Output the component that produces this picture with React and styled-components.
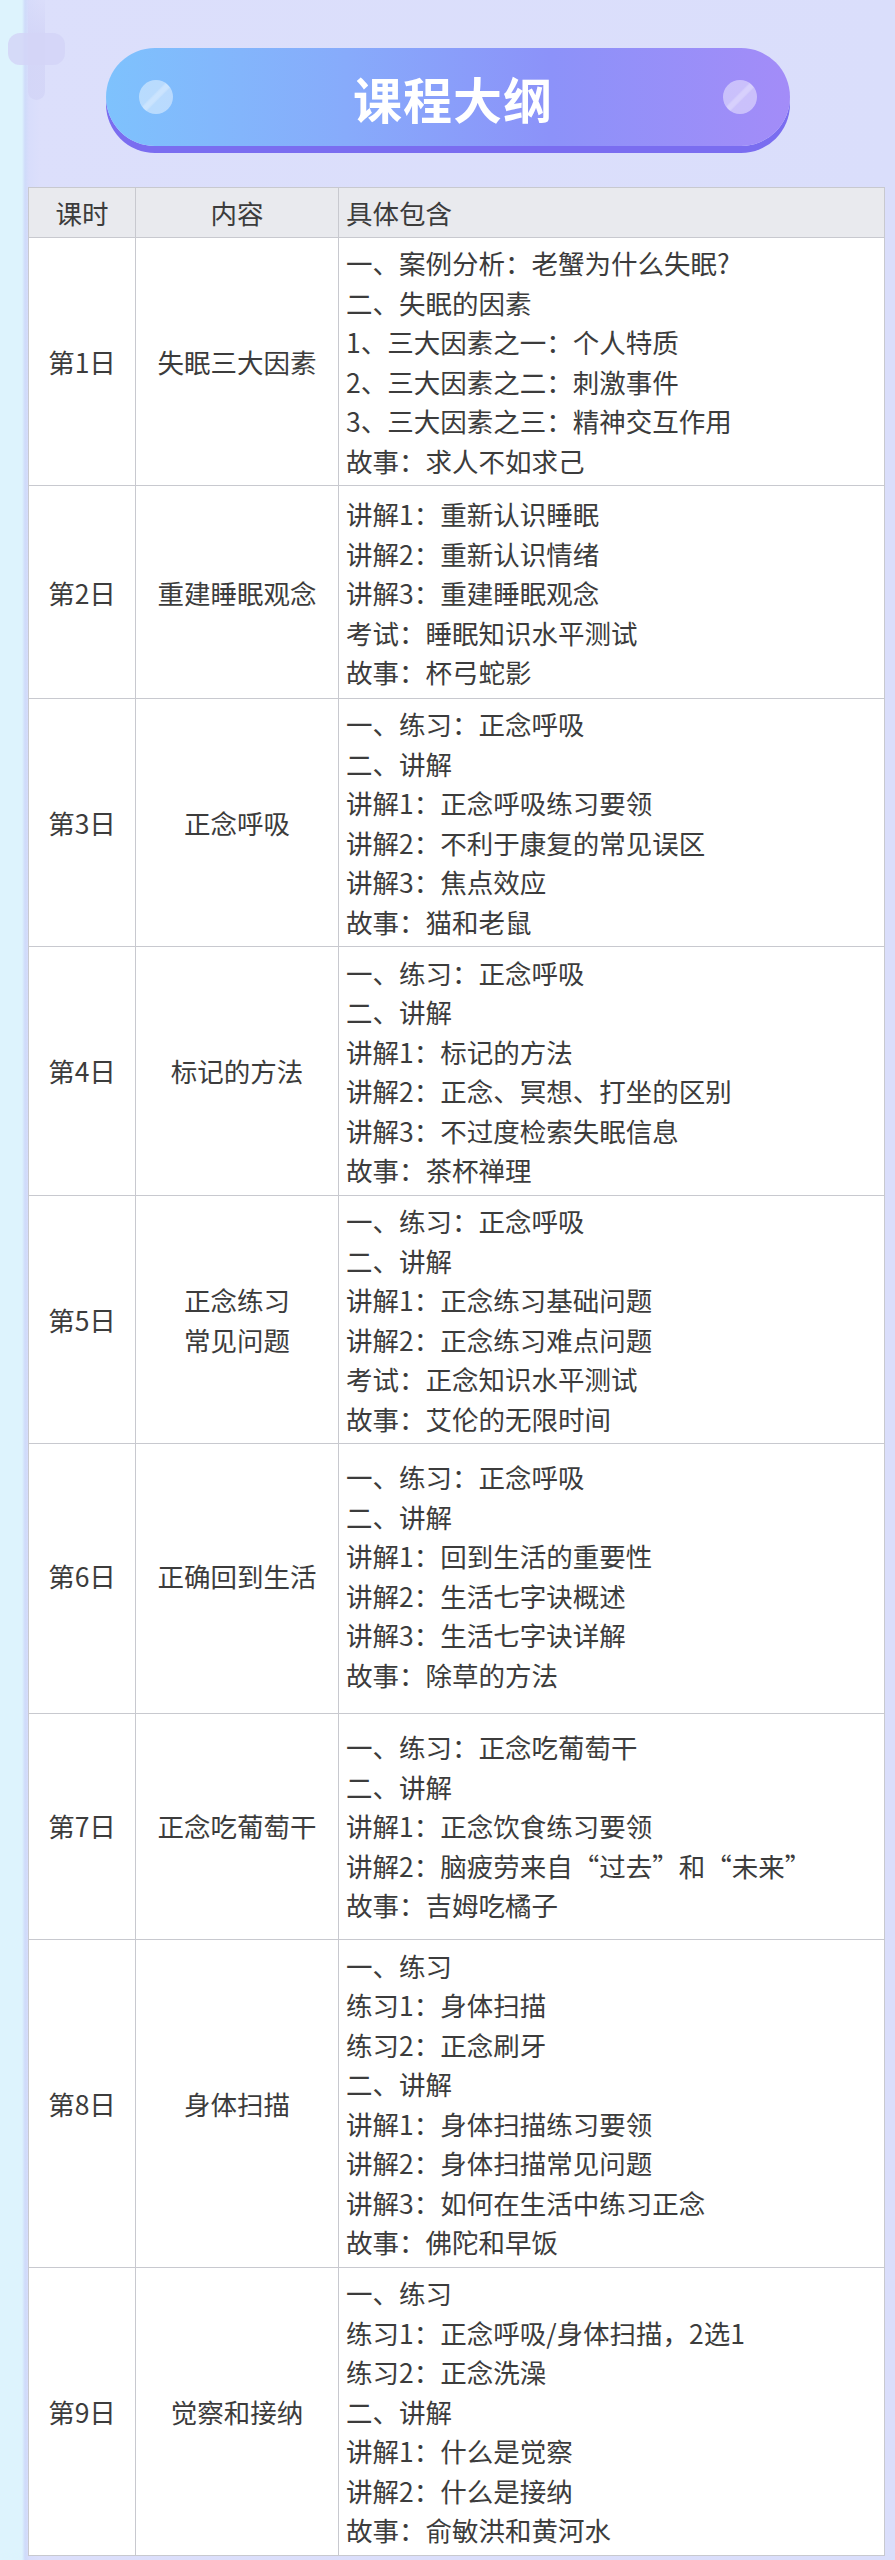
import React from "react";
import styled, { createGlobalStyle } from "styled-components";

const GlobalStyle = createGlobalStyle`
  html, body {
    margin: 0;
    padding: 0;
  }
  body {
    font-family: "Noto Sans CJK SC", "Noto Sans", sans-serif;
    color: #3c3c3c;
  }
`;

const Page = styled.div`
  position: relative;
  min-height: 2560px;
  padding: 48px 10px 0 28px;
  box-sizing: border-box;
  background:
    linear-gradient(to right, #ddf3fd 0, #ddf3fd 22px, #cfdbfa 25px, #d8ddfb 29px, rgba(220, 223, 251, 0) 40px),
    linear-gradient(to right, #dcdffb, #dadefb);
`;

const Cross = styled.span`
  position: absolute;
  left: 8px;
  top: 0;
  width: 57px;
  height: 100px;
  pointer-events: none;

  &::before,
  &::after {
    content: "";
    position: absolute;
    background: #d3d5f7;
    border-radius: 9px;
    opacity: 0.85;
  }
  &::before {
    left: 20px;
    top: -10px;
    width: 17px;
    height: 110px;
    background: linear-gradient(to bottom, rgba(211, 213, 247, 0), #d3d5f7 40%);
  }
  &::after {
    left: 0;
    top: 33px;
    width: 57px;
    height: 32px;
    border-radius: 12px;
  }
`;

const Banner = styled.div`
  display: flex;
  align-items: center;
  justify-content: space-between;
  width: 684px;
  height: 98px;
  margin: 0 0 41px 78px;
  padding: 0 33px;
  box-sizing: border-box;
  border-radius: 49px;
  background: linear-gradient(to right, #7ec2fd 0%, #87abfb 35%, #8c92f9 65%, #a38cf8 100%);
  box-shadow: 0 7px 0 #7a6df0;
`;

const Dot = styled.span`
  width: 34px;
  height: 34px;
  border-radius: 50%;
  background:
    linear-gradient(135deg, rgba(255, 255, 255, 0) 42%, rgba(255, 255, 255, 0.25) 46%, rgba(255, 255, 255, 0.25) 54%, rgba(255, 255, 255, 0) 58%),
    rgba(255, 255, 255, 0.45);
`;

const Title = styled.h1`
  margin: 0 0 0 10px;
  font-family: "Noto Sans CJK SC", sans-serif;
  font-size: 49px;
  font-weight: 700;
  letter-spacing: 1px;
  color: #ffffff;
  line-height: 1;
`;

const Table = styled.table`
  width: 857px;
  border-collapse: collapse;
  table-layout: fixed;
  background: #ffffff;
  font-size: 26.5px;
  line-height: 39.5px;
`;

const Head = styled.th`
  background: #e9eaee;
  border: 1px solid #c8c9cf;
  font-weight: 400;
  height: 49px;
  padding: 0 7px;
  text-align: ${(p) => p.$align || "center"};
  color: #3c3c3c;
`;

const Cell = styled.td`
  border: 1px solid #c8c9cf;
  padding: ${(p) => p.$pt}px 7px ${(p) => p.$pb}px;
  text-align: ${(p) => p.$align || "center"};
  vertical-align: middle;
  white-space: nowrap;
`;

const Line = styled.div`
  white-space: nowrap;
`;

const rows = [
  {
    day: "第1日",
    topic: ["失眠三大因素"],
    pad: [5, 5],
    items: [
      "一、案例分析：老蟹为什么失眠?",
      "二、失眠的因素",
      "1、三大因素之一：个人特质",
      "2、三大因素之二：刺激事件",
      "3、三大因素之三：精神交互作用",
      "故事：求人不如求己",
    ],
  },
  {
    day: "第2日",
    topic: ["重建睡眠观念"],
    pad: [8, 6.5],
    items: [
      "讲解1：重新认识睡眠",
      "讲解2：重新认识情绪",
      "讲解3：重建睡眠观念",
      "考试：睡眠知识水平测试",
      "故事：杯弓蛇影",
    ],
  },
  {
    day: "第3日",
    topic: ["正念呼吸"],
    pad: [5, 5],
    items: [
      "一、练习：正念呼吸",
      "二、讲解",
      "讲解1：正念呼吸练习要领",
      "讲解2：不利于康复的常见误区",
      "讲解3：焦点效应",
      "故事：猫和老鼠",
    ],
  },
  {
    day: "第4日",
    topic: ["标记的方法"],
    pad: [5.5, 5.5],
    items: [
      "一、练习：正念呼吸",
      "二、讲解",
      "讲解1：标记的方法",
      "讲解2：正念、冥想、打坐的区别",
      "讲解3：不过度检索失眠信息",
      "故事：茶杯禅理",
    ],
  },
  {
    day: "第5日",
    topic: ["正念练习", "常见问题"],
    pad: [5, 5],
    items: [
      "一、练习：正念呼吸",
      "二、讲解",
      "讲解1：正念练习基础问题",
      "讲解2：正念练习难点问题",
      "考试：正念知识水平测试",
      "故事：艾伦的无限时间",
    ],
  },
  {
    day: "第6日",
    topic: ["正确回到生活"],
    pad: [13, 19],
    items: [
      "一、练习：正念呼吸",
      "二、讲解",
      "讲解1：回到生活的重要性",
      "讲解2：生活七字诀概述",
      "讲解3：生活七字诀详解",
      "故事：除草的方法",
    ],
  },
  {
    day: "第7日",
    topic: ["正念吃葡萄干"],
    pad: [13, 14.5],
    items: [
      "一、练习：正念吃葡萄干",
      "二、讲解",
      "讲解1：正念饮食练习要领",
      "讲解2：脑疲劳来自“过去”和“未来”",
      "故事：吉姆吃橘子",
    ],
  },
  {
    day: "第8日",
    topic: ["身体扫描"],
    pad: [5.5, 5.5],
    items: [
      "一、练习",
      "练习1：身体扫描",
      "练习2：正念刷牙",
      "二、讲解",
      "讲解1：身体扫描练习要领",
      "讲解2：身体扫描常见问题",
      "讲解3：如何在生活中练习正念",
      "故事：佛陀和早饭",
    ],
  },
  {
    day: "第9日",
    topic: ["觉察和接纳"],
    pad: [5, 5.5],
    items: [
      "一、练习",
      "练习1：正念呼吸/身体扫描，2选1",
      "练习2：正念洗澡",
      "二、讲解",
      "讲解1：什么是觉察",
      "讲解2：什么是接纳",
      "故事：俞敏洪和黄河水",
    ],
  },
];

export default function App() {
  return (
    <>
      <GlobalStyle />
      <Page>
        <Cross />
        <Banner>
          <Dot />
          <Title>课程大纲</Title>
          <Dot />
        </Banner>
        <Table>
          <colgroup>
            <col style={{ width: 107 }} />
            <col style={{ width: 203 }} />
            <col />
          </colgroup>
          <thead>
            <tr>
              <Head>课时</Head>
              <Head>内容</Head>
              <Head $align="left">具体包含</Head>
            </tr>
          </thead>
          <tbody>
            {rows.map((r) => (
              <tr key={r.day}>
                <Cell $pt={r.pad[0]} $pb={r.pad[1]}>
                  {r.day}
                </Cell>
                <Cell $pt={r.pad[0]} $pb={r.pad[1]}>
                  {r.topic.map((t) => (
                    <Line key={t}>{t}</Line>
                  ))}
                </Cell>
                <Cell $pt={r.pad[0]} $pb={r.pad[1]} $align="left">
                  {r.items.map((t) => (
                    <Line key={t}>{t}</Line>
                  ))}
                </Cell>
              </tr>
            ))}
          </tbody>
        </Table>
      </Page>
    </>
  );
}
